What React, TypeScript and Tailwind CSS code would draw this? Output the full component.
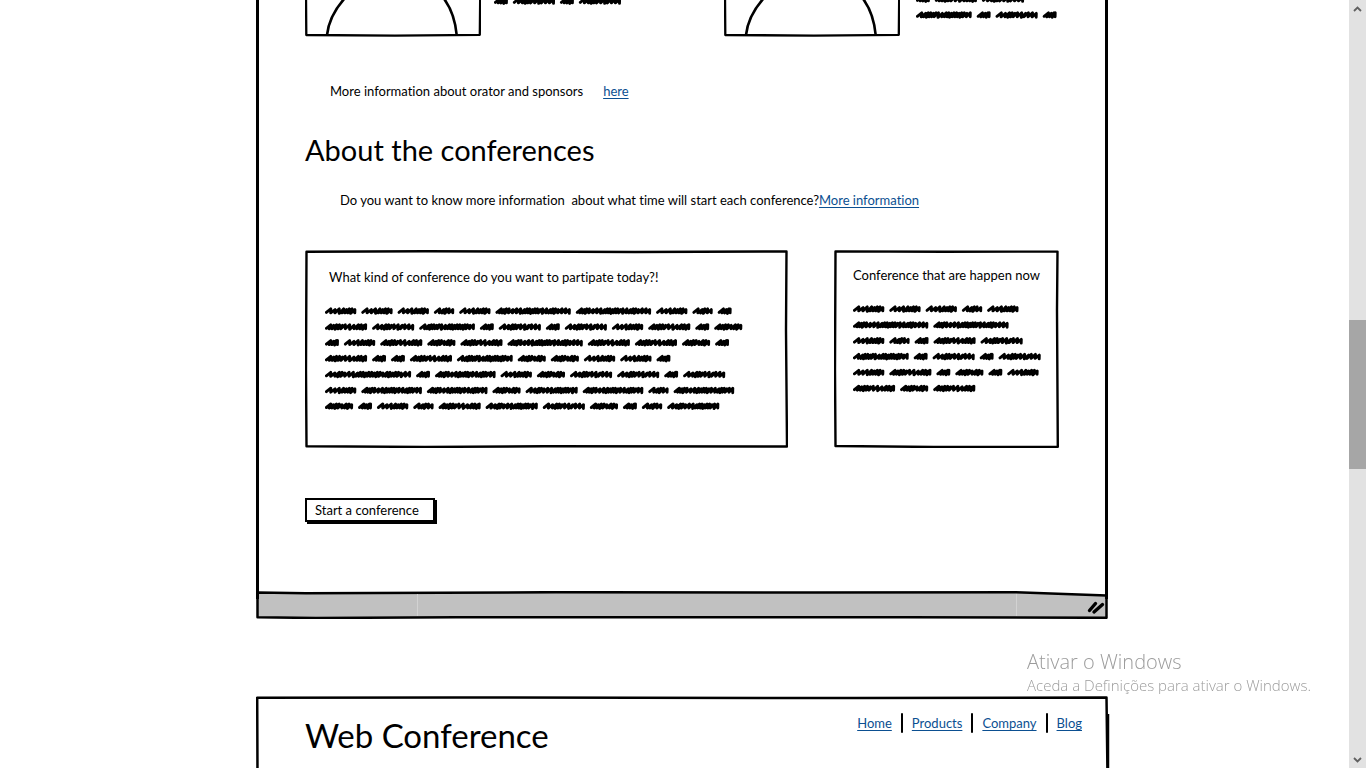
import type { ReactNode } from "react";

type Word = { width: number; strokes: string };

// Each word is a run of pen strokes: "o" is an open stroke, "d" a dense one.
const WORDS: Record<string, Word> = {
  A: { width: 31.3, strokes: "oooddddo" },
  B: { width: 20.3, strokes: "oddoo" },
  C: { width: 75.3, strokes: "dddoooodddddddoodddoooo" },
  D: { width: 13.9, strokes: "dddd" },
  E: { width: 28.1, strokes: "ddddoddo" },
  F: { width: 42.1, strokes: "dddddooodddd" },
  G: { width: 42.1, strokes: "oodddoodooo" },
  H: { width: 55.7, strokes: "odddddooddddddddoo" },
  I: { width: 60.6, strokes: "dddooodddddooddddoo" },
  J: { width: 86.1, strokes: "ooddooodddddddddodddddooo" },
  K: { width: 52.1, strokes: "ooddooodddddddoo" },
};

const WORD_GAP = 5;

function wordPath(word: Word, left: number, mid: number) {
  const advances = [...word.strokes].map((s) => (s === "o" ? 4.2 : 2.8));
  const total = advances.reduce((a, b) => a + b, 0);
  const scale = (word.width - 2.9) / total;
  const end = left + word.width - 1.4;
  let x = left + 1.4;
  let d = `M${x.toFixed(1)} ${(mid + 1.4).toFixed(1)}`;
  advances.forEach((advance, i) => {
    const rise = Math.min(4.4, end - x);
    const top = mid - 2.1 + (i % 3 === 1 ? 0.7 : 0);
    const bottom = mid + 1.9 + (i % 4 === 2 ? 0.5 : 0);
    d += `L${(x + rise).toFixed(1)} ${top.toFixed(1)}`;
    x += advance * scale;
    d += `L${x.toFixed(1)} ${bottom.toFixed(1)}`;
  });
  return d;
}

function Scribble({ lines, width, className = "" }: { lines: string[]; width: number; className?: string }) {
  const pitch = 15.85;
  const height = Math.round(lines.length * pitch);
  return (
    <svg
      className={`block shrink-0 ${className}`}
      width={width}
      height={height}
      viewBox={`0 0 ${width} ${height}`}
      fill="none"
      stroke="#000"
      strokeWidth="2.9"
      strokeLinecap="round"
      strokeLinejoin="round"
      aria-hidden="true"
    >
      {lines.map((line, row) => {
        let x = 0;
        return [...line].map((key, i) => {
          const word = WORDS[key];
          const d = wordPath(word, x, row * pitch + 8);
          x += word.width + WORD_GAP;
          return <path key={`${row}-${i}`} d={d} />;
        });
      })}
    </svg>
  );
}

function Portrait() {
  return (
    <svg className="block h-[37px] w-[176px] shrink-0" viewBox="0 0 176 37" fill="none" stroke="#000" aria-hidden="true">
      <path d="M1 -4L1.3 35L90 35.6L174.8 34.8L175.2 -4" strokeWidth="2.3" strokeLinejoin="round" />
      <path d="M22 35C23.5 22 29 10 40 -2M138.500 -2C146 8 150.500 22 151.700 35" strokeWidth="2.6" />
    </svg>
  );
}

function Panel({ d, viewBox, className, children }: { d: string; viewBox: string; className: string; children: ReactNode }) {
  return (
    <section className={`relative min-h-[198px] min-w-0 ${className}`}>
      <svg className="absolute inset-0 h-full w-full" viewBox={viewBox} preserveAspectRatio="none" fill="none" stroke="#000" aria-hidden="true">
        <path d={d} strokeWidth="2.4" strokeLinejoin="round" vectorEffect="non-scaling-stroke" />
      </svg>
      <div className="relative">{children}</div>
    </section>
  );
}

const NAV = ["Home", "Products", "Company", "Blog"];
const LINK = "text-[#0b4f91] underline decoration-1 underline-offset-2";

export default function App() {
  return (
    <div className="flex h-screen overflow-hidden bg-white font-['Lato',sans-serif] text-[13px] leading-5 text-black [font-variant-ligatures:none]">
      <main className="min-w-0 flex-1 overflow-hidden pl-64">
        <article className="w-full max-w-[852px]">
          <div className="border-x-3 border-black pr-[46px] pb-[69px] pl-[46px]">
            <div className="grid h-[37px] grid-cols-[419px_1fr] content-end overflow-hidden">
              <div className="flex items-end gap-[13px]">
                <Portrait />
                <Scribble lines={["DGDG"]} width={135} className="mb-7" />
              </div>
              <div className="flex items-end gap-4">
                <Portrait />
                <Scribble lines={["DFG", "HDGD"]} width={145} className="mb-[14px]" />
              </div>
            </div>

            <p className="mt-11 flex gap-5 pl-[25px]">
              <span>More information about orator and sponsors</span>
              <a href="#sponsors" className={LINK}>here</a>
            </p>

            <h2 className="mt-[29px] text-[29px] leading-10">About the conferences</h2>
            <p className="mt-5 pl-[35px] whitespace-pre">
              {"Do you want to know more information  about what time will start each conference?"}
              <a href="#schedule" className={LINK}>More information</a>
            </p>

            <div className="mt-10 grid grid-cols-[483fr_225fr] gap-[46px]">
              <Panel
                className="pt-[17px] pl-5"
                viewBox="0 0 483 198"
                d="M1.500 1.800L120 1.200L330 2L481.500 1.400L481 80L482 196.500L240 196.200L120 197L1.500 196.200L1 120Z"
              >
                <h3 className="pl-1">What kind of conference do you want to partipate today?!</h3>
                <Scribble
                  className="mt-4"
                  width={420}
                  lines={["AAABACCABD", "FGHDGDGAFDE", "DAFEFCFFED", "FDDFHEEAAD", "JDIAEGGDG", "AIIEKIBI", "EDABFKGEDBK"]}
                />
              </Panel>
              <Panel
                className="pt-[15px] pl-[19px]"
                viewBox="0 0 225 198"
                d="M1.500 1.400L110 1.800L223.500 1.600L223 60L223.800 196.800L100 197L1.500 196L1 120Z"
              >
                <h3 className="whitespace-nowrap">Conference that are happen now</h3>
                <Scribble className="mt-4" width={190} lines={["AAABA", "CC", "ABDFG", "HDGDG", "AFDEDA", "FEF"]} />
              </Panel>
            </div>

            <button type="button" className="mt-[50px] block h-6 min-w-[130px] border-2 border-black bg-white px-2 text-left leading-4 shadow-[2px_2px_0_#000]">
              Start a conference
            </button>
          </div>

          <svg className="block h-7 w-full" viewBox="0 0 852 28" preserveAspectRatio="none" aria-hidden="true">
            <path d="M1.500 1.500L50 2.200L300 1.200L560 1.500L760 1.300L850.500 4.500L850.500 26.800L650 26.300L200 26.300L60 27L1.500 26.300Z" fill="#c1c1c1" stroke="#000" strokeWidth="2.5" strokeLinejoin="round" />
            <path d="M850.500 0V8M1.500 0V8" stroke="#000" strokeWidth="3" />
            <path d="M161.500 3V25M760.500 3V25" stroke="#d2d2d2" strokeWidth="1" />
            <path d="M833.500 19.500L839.500 12.500M838 21L846.500 13.500" stroke="#000" strokeWidth="3.400" strokeLinecap="round" />
          </svg>
        </article>

        <article className="relative mt-[77px] w-full max-w-[854px]">
          <svg className="absolute inset-0 h-full w-full" viewBox="0 0 854 80" preserveAspectRatio="none" fill="none" stroke="#000" aria-hidden="true">
            <path d="M1.500 80L1.200 1.800L200 1.500L600 2L850.500 1.500L851.500 80" strokeWidth="2.500" strokeLinejoin="round" />
            <path d="M852.500 18V80" strokeWidth="1.500" />
          </svg>
          <header className="relative flex h-20 items-start justify-between pr-[28px] pl-[49px]">
            <h1 className="pt-[19px] text-[33px] leading-10">Web Conference</h1>
            <nav className="flex items-center pt-[17px]">
              {NAV.map((label, i) => (
                <span key={label} className="flex items-center">
                  {i > 0 && <span className="mx-[9px] h-5 w-[2px] rounded-full bg-black" />}
                  <a href={`#${label.toLowerCase()}`} className={LINK}>{label}</a>
                </span>
              ))}
            </nav>
          </header>
        </article>
      </main>

      <aside className="flex w-[17px] shrink-0 flex-col bg-[#e2e2e2]" aria-label="Page scroll">
        <button type="button" aria-label="Scroll up" className="flex h-[17px] items-center justify-center">
          <svg width="9" height="6" viewBox="0 0 9 6" fill="none" stroke="#606060" strokeWidth="1.800"><path d="M1 5L4.500 1.500L8 5" /></svg>
        </button>
        <div className="flex flex-1 flex-col">
          <div className="flex-[303_1_0%]" />
          <div className="flex-[149_1_0%] bg-[#a6a6a6]" />
          <div className="flex-[282_1_0%]" />
        </div>
        <button type="button" aria-label="Scroll down" className="flex h-[17px] items-center justify-center">
          <svg width="9" height="6" viewBox="0 0 9 6" fill="none" stroke="#606060" strokeWidth="1.800"><path d="M1 1L4.500 4.500L8 1" /></svg>
        </button>
      </aside>

      <div className="pointer-events-none fixed right-[55px] bottom-[72px] font-['Open_Sans',sans-serif] font-light text-[#9c9c9c]">
        <p className="text-[20px] leading-6">Ativar o Windows</p>
        <p className="text-[15px] leading-[22px]">Aceda a Definições para ativar o Windows.</p>
      </div>
    </div>
  );
}
